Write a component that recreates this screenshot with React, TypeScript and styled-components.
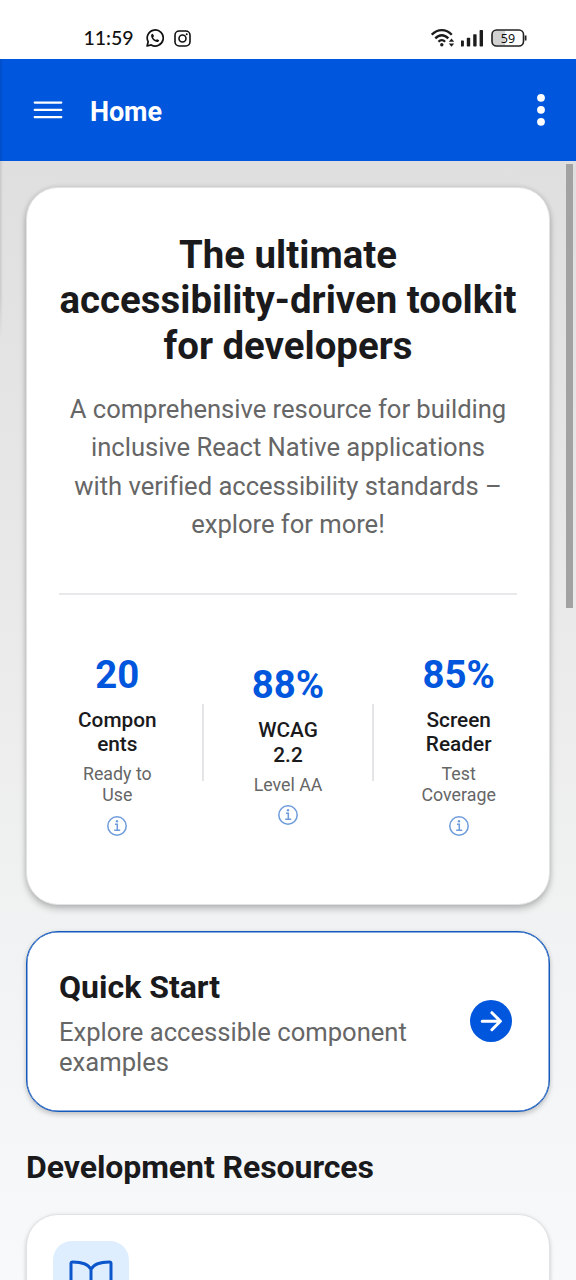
import React from 'react';
import styled, { createGlobalStyle } from 'styled-components';

const Global = createGlobalStyle`
  * { box-sizing: border-box; }
  body { margin: 0; font-family: Roboto, sans-serif; background: #fff; }
`;

const Screen = styled.div`
  position: relative;
  height: 1280px;
  width: 576px;
  overflow: hidden;
  display: flex;
  flex-direction: column;
`;

const StatusBar = styled.div`
  height: 59px;
  flex: none;
  display: flex;
  align-items: center;
  justify-content: space-between;
  padding: 17px 49px 0 83px;
  color: #111;
`;

const StatusGroup = styled.div<{ $gap: number }>`
  display: flex;
  align-items: center;
  gap: ${(p) => p.$gap}px;
`;

const Clock = styled.span`
  font: 500 19.5px/24px Lato, sans-serif;
  width: 50px;
  margin-right: 3px;
  padding-left: 0.5px;
  white-space: nowrap;
`;

const AppBar = styled.header`
  height: 102px;
  flex: none;
  background: #0056dc;
  color: #fff;
  display: flex;
  align-items: center;
  padding: 0 31px 0 33px;
`;

const AppTitle = styled.h1`
  margin: 4px auto 0 27px;
  font-size: 27px;
  line-height: 32px;
  font-weight: 700;
  letter-spacing: -0.1px;
`;

const Content = styled.main`
  flex: 1;
  display: flex;
  flex-direction: column;
  padding: 26px 26px 0;
  background: linear-gradient(180deg, #dfdfdf 0%, #e8e8e8 35%, #f0f1f1 65%, #f4f5f7 82%, #f8f9fb 100%);
  overflow: hidden;
`;

const Card = styled.section`
  flex: none;
  background: #fff;
  border: 1px solid #e1e2e3;
  border-radius: 32px;
  box-shadow: 0 4px 7px rgba(0, 0, 0, 0.22), 0 0 5px rgba(0, 0, 0, 0.1);
`;

const HeroCard = styled(Card)`
  height: 718px;
  padding: 44px 32px 0;
  text-align: center;
`;

const HeroTitle = styled.h2`
  margin: 0 -8px;
  font-size: 38.4px;
  line-height: 45.3px;
  font-weight: 700;
  color: #1a1a1c;
  white-space: nowrap;
`;

const HeroText = styled.p`
  margin: 22px 0 0;
  font-size: 25.6px;
  line-height: 38.4px;
  letter-spacing: -0.03px;
  color: #666;
  white-space: nowrap;
`;

const Stats = styled.div`
  margin-top: 49px;
  border-top: 2px solid #e8e9ea;
  padding-top: 57px;
  display: flex;
  align-items: center;
`;

const Stat = styled.div`
  flex: 1;
  display: flex;
  flex-direction: column;
  align-items: center;
`;

const StatDivider = styled.div`
  width: 2px;
  height: 77px;
  margin: 0 26px 2px;
  background: #e4e5e6;
`;

const StatValue = styled.div`
  font-size: 38.4px;
  line-height: 45px;
  font-weight: 700;
  color: #0056dc;
`;

const StatLabel = styled.div`
  margin-top: 11px;
  font-size: 20.8px;
  line-height: 24.4px;
  font-weight: 500;
  color: #1a1a1c;
`;

const StatNote = styled.div`
  margin: 6.8px 0 9.8px;
  font-size: 17.8px;
  line-height: 21.3px;
  color: #666;
`;

const QuickCard = styled(Card)`
  margin-top: 26px;
  height: 181px;
  padding: 2px 37px 0 32px;
  display: flex;
  align-items: center;
  justify-content: space-between;
  border-color: #1459bd;
  box-shadow: inset 0 0 0 0.5px #1459bd, 0 3px 5px rgba(0, 0, 0, 0.18), 0 0 4px rgba(0, 0, 0, 0.07);
`;

const QuickTitle = styled.h3`
  margin: 0 0 11px;
  font-size: 32px;
  line-height: 38px;
  font-weight: 700;
  color: #1a1a1c;
`;

const QuickText = styled.p`
  margin: 0;
  font-size: 25.6px;
  line-height: 30.4px;
  color: #666;
`;

const ArrowButton = styled.button`
  width: 42px;
  height: 42px;
  margin-bottom: 4px;
  border: 0;
  padding: 0;
  border-radius: 50%;
  background: #0056dc;
  display: grid;
  place-items: center;
`;

const SectionTitle = styled.h2`
  margin: 36px 0 28px;
  font-size: 32px;
  line-height: 38px;
  font-weight: 700;
  letter-spacing: -0.07px;
  color: #1a1a1c;
`;

const ResourceCard = styled(Card)`
  height: 200px;
  padding: 26px;
  box-shadow: 0 3px 5px rgba(0, 0, 0, 0.14), 0 0 4px rgba(0, 0, 0, 0.06);
`;

const IconTile = styled.div`
  width: 76px;
  height: 76px;
  border-radius: 19px;
  background: #deeefe;
  display: grid;
  place-items: center;
`;

const ScrollThumb = styled.div`
  position: absolute;
  right: 3px;
  top: 164px;
  width: 7px;
  height: 444px;
  background: #a2a2a2;
`;

const EdgeShadow = styled.div`
  position: absolute;
  left: 0;
  top: 59px;
  width: 3px;
  height: 280px;
  background: linear-gradient(90deg, rgba(0, 0, 0, 0.1), transparent);
  mask-image: linear-gradient(180deg, #000 85%, transparent);
`;

const WhatsApp = () => (
  <svg width="18" height="18" viewBox="0 0 18 18" fill="none" stroke="#111" strokeWidth="1.7">
    <path d="M1.1 17 2.2 12.8A8 8 0 1 1 5.2 15.9Z" strokeLinejoin="round" />
    <path d="M6.5 4.8c-.8.1-1.5 1-1.4 2 .3 3.200 3 5.800 6.100 6.200 1 0 1.900-.6 2-1.500 0-.5-1.900-1.500-2.300-1.300l-.9.9c-1.300-.5-2.400-1.500-2.900-2.800l.8-.9c.2-.4-.7-2.500-1.400-2.600Z" fill="#111" stroke="none" />
  </svg>
);

const Instagram = () => (
  <svg width="17" height="17" viewBox="0 0 17 17" fill="none" stroke="#111" strokeWidth="1.6">
    <rect x="1" y="1" width="15" height="15" rx="4.200" />
    <circle cx="8.500" cy="8.500" r="3.500" />
    <circle cx="12.700" cy="4.300" r="1" fill="#111" stroke="none" />
  </svg>
);

const Wifi = () => (
  <svg width="24" height="20" viewBox="0 0 24 20" fill="none" stroke="#1c1c1c" strokeWidth="2.300">
    <path d="M.8 6.700C6.600.5 15 .5 20.800 6.700" />
    <path d="M4.300 10.400c3.900-4.200 9.100-4.200 13 0" />
    <path d="M7.500 13.700c2-2.200 4.600-2.200 6.600 0" />
    <circle cx="10.800" cy="16.800" r="1.700" fill="#1c1c1c" stroke="none" />
    <path d="m17.800 13.800 2.700-3.200 2.700 3.200ZM17.800 15.500l2.700 3.200 2.700-3.200Z" fill="#1c1c1c" stroke="none" />
  </svg>
);

const Signal = () => (
  <svg width="24" height="18" viewBox="0 0 24 18" fill="#1c1c1c">
    <rect x="-.5" y="11.500" width="3.400" height="6" rx=".7" />
    <rect x="5.800" y="8.800" width="3.400" height="8.700" rx=".7" />
    <rect x="12.200" y="5.200" width="3.400" height="12.300" rx=".7" />
    <rect x="18.600" y="1" width="3.400" height="16.500" rx=".7" />
  </svg>
);

const Battery = () => (
  <svg width="36" height="18" viewBox="0 0 36 18">
    <path d="M5 1.500h9v15H5a4 4 0 0 1-4-4v-7a4 4 0 0 1 4-4Z" fill="#d2d2d2" />
    <rect x="1" y="1" width="31.500" height="16" rx="4.500" fill="none" stroke="#222" strokeWidth="1.600" />
    <path d="M34.600 6.500v5" stroke="#222" strokeWidth="1.800" />
    <text x="17" y="13.500" textAnchor="middle" fontFamily="Noto Sans" fontSize="12.500" fill="#111">59</text>
  </svg>
);

const MenuIcon = () => (
  <svg width="30" height="20" viewBox="0 0 30 20" stroke="#fff" strokeWidth="2.200" strokeLinecap="round">
    <path d="M1.700 2.600h26.600M1.700 9.900h26.600M1.700 17.200h26.600" />
  </svg>
);

const MoreIcon = () => (
  <svg width="8" height="34" viewBox="0 0 8 34" fill="#fff">
    <circle cx="4" cy="4.800" r="3.900" />
    <circle cx="4" cy="16.800" r="3.900" />
    <circle cx="4" cy="28.800" r="3.900" />
  </svg>
);

const InfoIcon = () => (
  <svg width="20" height="20" viewBox="0 0 20 20" fill="none" stroke="#6d9bdb" strokeWidth="1.500">
    <circle cx="10" cy="10" r="9.200" />
    <path d="M8 8.200h2.300v6M7.200 14.300h6" strokeWidth="1.500" />
    <circle cx="10" cy="5.200" r="1.200" fill="#6d9bdb" stroke="none" />
  </svg>
);

const ArrowIcon = () => (
  <svg width="24" height="24" viewBox="0 0 24 24" fill="none" stroke="#fff" strokeWidth="3" strokeLinecap="round" strokeLinejoin="round">
    <path d="M3.200 12.200h18M12.900 3.700l8.500 8.500-8.500 8.500" />
  </svg>
);

const BookIcon = () => (
  <svg width="44" height="38" viewBox="0 0 44 38" fill="none" stroke="#0c56cc" strokeWidth="3" strokeLinejoin="round" strokeLinecap="round">
    <path d="M22 9.500C19.500 4 13 2 3.600 2Q2 2 2 3.600V29q0 2 2 2c9 0 15 1.500 18 6 3-4.500 9-6 18-6q2 0 2-2V3.600Q42 2 40.400 2C31 2 24.500 4 22 9.500ZM22 9.500V37" />
  </svg>
);

const stats = [
  { value: '20', label: ['Compon', 'ents'], note: ['Ready to', 'Use'] },
  { value: '88%', label: ['WCAG', '2.2'], note: ['Level AA'] },
  { value: '85%', label: ['Screen', 'Reader'], note: ['Test', 'Coverage'] },
];

const Lines = ({ items }: { items: string[] }) => (
  <>
    {items.map((line, i) => (
      <React.Fragment key={line}>
        {i > 0 && <br />}
        {line}
      </React.Fragment>
    ))}
  </>
);

export default function App() {
  return (
    <Screen>
      <Global />
      <StatusBar>
        <StatusGroup $gap={10}>
          <Clock>11:59</Clock>
          <WhatsApp />
          <Instagram />
        </StatusGroup>
        <StatusGroup $gap={6}>
          <Wifi />
          <Signal />
          <Battery />
        </StatusGroup>
      </StatusBar>
      <AppBar>
        <MenuIcon />
        <AppTitle>Home</AppTitle>
        <MoreIcon />
      </AppBar>
      <Content>
        <HeroCard>
          <HeroTitle>
            <Lines items={['The ultimate', 'accessibility-driven toolkit', 'for developers']} />
          </HeroTitle>
          <HeroText>
            <Lines
              items={[
                'A comprehensive resource for building',
                'inclusive React Native applications',
                'with verified accessibility standards –',
                'explore for more!',
              ]}
            />
          </HeroText>
          <Stats>
            {stats.map((s, i) => (
              <React.Fragment key={s.value}>
                {i > 0 && <StatDivider />}
                <Stat>
                  <StatValue>{s.value}</StatValue>
                  <StatLabel><Lines items={s.label} /></StatLabel>
                  <StatNote><Lines items={s.note} /></StatNote>
                  <InfoIcon />
                </Stat>
              </React.Fragment>
            ))}
          </Stats>
        </HeroCard>
        <QuickCard>
          <div>
            <QuickTitle>Quick Start</QuickTitle>
            <QuickText>
              <Lines items={['Explore accessible component', 'examples']} />
            </QuickText>
          </div>
          <ArrowButton aria-label="Open Quick Start"><ArrowIcon /></ArrowButton>
        </QuickCard>
        <SectionTitle>Development Resources</SectionTitle>
        <ResourceCard>
          <IconTile><BookIcon /></IconTile>
        </ResourceCard>
      </Content>
      <EdgeShadow />
      <ScrollThumb />
    </Screen>
  );
}
